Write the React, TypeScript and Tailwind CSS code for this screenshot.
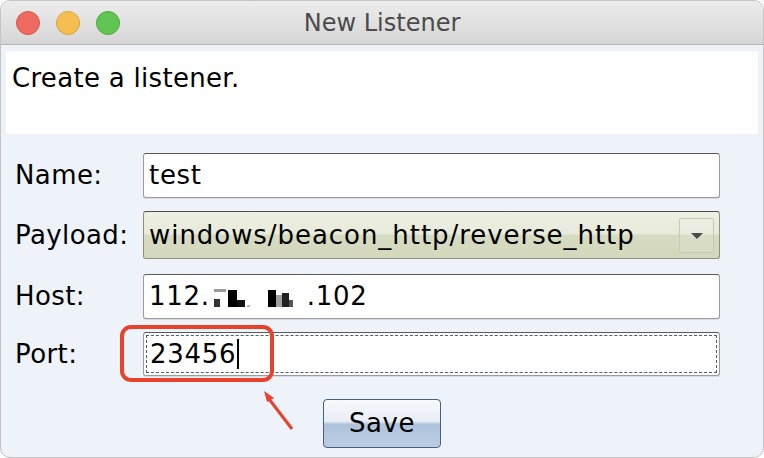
import React from "react";

const font = { fontFamily: '"DejaVu Sans", "Liberation Sans", sans-serif' };

function Light({ color }: { color: string }) {
  return <span className={`inline-block h-[24px] w-[24px] rounded-full border ${color}`} />;
}

function Field({ children, focused }: { children: React.ReactNode; focused?: boolean }) {
  return (
    <div className="flex h-full w-full rounded-[3px] border border-[#9c9c9c] border-t-[#5a5a5a] bg-white p-[2px] shadow-[0_1px_0_#d8dbe2]">
      <div
        className={`flex h-full w-full items-center pl-[3px] text-[26px] tracking-[0.7px] text-black ${
          focused ? "border border-dashed border-[#475c7c]" : ""
        }`}
      >
        {children}
      </div>
    </div>
  );
}

function Redacted() {
  return (
    <svg width="95" height="30" viewBox="0 0 95 30" className="mx-[1px] inline-block">
      <rect x="3" y="7" width="12" height="3" fill="#9a9a9a" />
      <rect x="3" y="17" width="6" height="8" fill="#333" />
      <rect x="17" y="8" width="9" height="17" fill="#000" />
      <rect x="26" y="18" width="8" height="7" fill="#111" />
      <rect x="36" y="23" width="3" height="2" fill="#bbb" />
      <rect x="57" y="8" width="8" height="17" fill="#000" />
      <rect x="65" y="13" width="13" height="12" fill="#a0a0a0" />
      <rect x="71" y="11" width="7" height="14" fill="#222" />
      <rect x="78" y="18" width="4" height="7" fill="#555" />
    </svg>
  );
}

export default function App() {
  const rows: { label: string; h: string; mt: string; node: React.ReactNode }[] = [
    { label: "Name:", h: "h-[45px]", mt: "mt-[19px]", node: <Field>test</Field> },
    {
      label: "Payload:",
      h: "h-[48px]",
      mt: "mt-[13px]",
      node: (
        <div className="flex h-full w-full items-center rounded-[3px] border border-[#8d8f7f] border-t-[#4f5146] bg-[linear-gradient(#edefe2_0%,#e8eadb_48%,#d6dbc1_50%,#d3d8bd_100%)] pl-[5px] pr-[5px] text-[26px] tracking-[0.95px] text-black">
          <span className="flex-1">windows/beacon_http/reverse_http</span>
          <span className="flex h-[35px] w-[35px] items-center justify-center rounded-[2px] border border-[#c7c9b6] bg-[linear-gradient(#eef0e4_0%,#e9ebdd_45%,#dadec8_50%,#d7dbc3_100%)]">
            <svg width="12" height="7" viewBox="0 0 12 7">
              <path d="M0 1 H12 L6 7 Z" fill="#4a4a4a" />
            </svg>
          </span>
        </div>
      ),
    },
    {
      label: "Host:",
      h: "h-[45px]",
      mt: "mt-[15px]",
      node: (
        <Field>
          <span>112.</span>
          <Redacted />
          <span>.102</span>
        </Field>
      ),
    },
    {
      label: "Port:",
      h: "h-[44px]",
      mt: "mt-[13px]",
      node: (
        <Field focused>
          <span>23456</span>
          <span className="ml-[1px] inline-block h-[30px] w-[2px] bg-black" />
        </Field>
      ),
    },
  ];

  return (
    <div className="h-[458px] w-[764px] bg-white" style={font}>
      <div className="relative flex h-[458px] w-[764px] flex-col overflow-hidden rounded-[10px] border border-[#c4c4c4] bg-[#eef2f9]">
        <div className="grid h-[44px] shrink-0 grid-cols-[1fr_auto_1fr] items-center border-b border-[#b3b3b3] bg-[linear-gradient(#ececec,#d6d6d6)]">
          <div className="flex items-center gap-[16px] pl-[15px]">
            <Light color="border-[#d9534a] bg-[#ef6a5e]" />
            <Light color="border-[#dca53d] bg-[#f6be50]" />
            <Light color="border-[#4ea740] bg-[#61c554]" />
          </div>
          <div className="text-[24px] text-[#4b4b4b]">New Listener</div>
          <div />
        </div>

        <div className="mx-[5px] mt-[6px] h-[83px] bg-white pl-[6px] pt-[8px] text-[26px] tracking-[0.3px] text-black">
          Create a listener.
        </div>

        <div className="flex flex-col pr-[43px]">
          {rows.map((r) => (
            <div key={r.label} className={`flex items-center ${r.h} ${r.mt}`}>
              <div className="w-[142px] pl-[14px] text-[26px] tracking-[0.4px] text-black">{r.label}</div>
              <div className="h-full flex-1">{r.node}</div>
            </div>
          ))}
        </div>

        <div className="mt-[23px] flex justify-center">
          <button className="flex h-[49px] w-[118px] items-center justify-center rounded-[4px] border-[1.5px] border-[#46607f] bg-[linear-gradient(#f7f9fc_0%,#e9eef5_45%,#aec3dc_52%,#bccde2_100%)] text-[26px] tracking-[0.5px] text-black">
            Save
          </button>
        </div>

        <svg className="pointer-events-none absolute left-0 top-0" width="764" height="458">
          <rect x="121" y="326" width="150" height="53" rx="9" fill="none" stroke="#e8412c" strokeWidth="4" />
          <line x1="291" y1="428" x2="268" y2="398" stroke="#e8412c" strokeWidth="3" />
          <path d="M263 390 L273 397 L266 401 Z" fill="#e8412c" />
        </svg>
      </div>
    </div>
  );
}
